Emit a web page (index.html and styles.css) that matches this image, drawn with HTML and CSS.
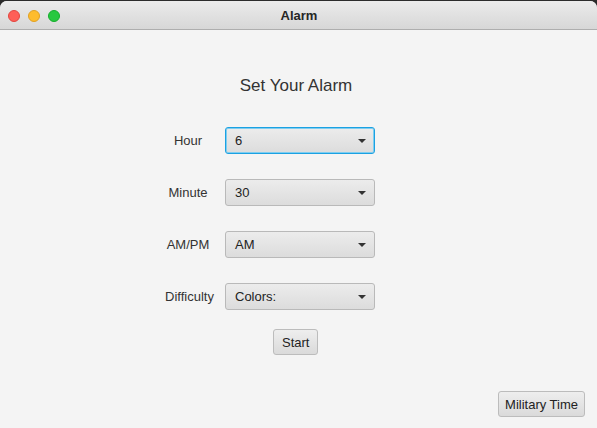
FILE: index.html
```html
<!DOCTYPE html>
<html>
<head>
<meta charset="utf-8">
<link rel="stylesheet" href="styles.css">
</head>
<body>
<div class="window">
  <div class="titlebar">
    <div class="lights">
      <span class="light red"></span>
      <span class="light yellow"></span>
      <span class="light green"></span>
    </div>
    <div class="wtitle">Alarm</div>
  </div>
  <div class="content">
    <h1 class="heading">Set Your Alarm</h1>
    <div class="form">
      <div class="label">Hour</div>
      <div class="combo focused"><span>6</span><i class="arrow"></i></div>
      <div class="label">Minute</div>
      <div class="combo"><span>30</span><i class="arrow"></i></div>
      <div class="label">AM/PM</div>
      <div class="combo"><span>AM</span><i class="arrow"></i></div>
      <div class="label label-wide">Difficulty</div>
      <div class="combo"><span>Colors:</span><i class="arrow"></i></div>
    </div>
    <div class="start-row"><button class="btn">Start</button></div>
    <div class="footer"><button class="btn btn-mil">Military Time</button></div>
  </div>
</div>
</body>
</html>
```
FILE: styles.css
```css
html, body {
  margin: 0;
  padding: 0;
  background: #2b2b2b;
}
body {
  width: 597px;
  height: 428px;
  overflow: hidden;
  font-family: "Liberation Sans", Arial, sans-serif;
  font-size: 13px;
  color: #333;
}
.window {
  width: 597px;
  height: 427px;
  margin-top: 1px;
  background: #f4f4f4;
  border-radius: 7px 7px 0 0;
  overflow: hidden;
  display: flex;
  flex-direction: column;
}
.titlebar {
  height: 28px;
  flex: 0 0 28px;
  border-bottom: 1px solid #aeaeae;
  background: linear-gradient(#ebebeb, #d7d7d7);
  position: relative;
  display: flex;
  align-items: center;
  justify-content: center;
}
.lights {
  position: absolute;
  left: 8px;
  top: 9px;
  display: flex;
  gap: 8px;
}
.light {
  width: 12px;
  height: 12px;
  border-radius: 50%;
  box-sizing: border-box;
}
.red { background: #fe5f57; border: 1px solid #e2463f; }
.yellow { background: #febc2e; border: 1px solid #e1a123; }
.green { background: #28c840; border: 1px solid #14ae2b; }
.wtitle {
  font-weight: bold;
  font-size: 13px;
  color: #262626;
  margin-left: 1px;
  margin-top: 1px;
}
.content {
  flex: 1;
  display: flex;
  flex-direction: column;
}
.heading {
  margin: 46px 0 0 -5px;
  font-weight: normal;
  font-size: 17px;
  line-height: 20px;
  text-align: center;
  color: #333;
}
.form {
  margin: 31px 0 0 158px;
  display: grid;
  grid-template-columns: 60px 150px;
  column-gap: 7px;
  row-gap: 25px;
  align-items: center;
}
.label {
  text-align: center;
  color: #333;
}
.label-wide {
  padding-left: 3px;
}
.combo {
  height: 27px;
  box-sizing: border-box;
  border: 1px solid #b9b9b9;
  border-radius: 3px;
  background: linear-gradient(#ececec, #dcdcdc);
  display: flex;
  align-items: center;
  justify-content: space-between;
  padding: 0 8px 0 9px;
  color: #222;
}
.combo.focused {
  border-color: #1ba1e2;
  box-shadow: inset 0 0 0 1px #7fcdf0;
}
.arrow {
  width: 0;
  height: 0;
  border-left: 4px solid transparent;
  border-right: 4px solid transparent;
  border-top: 4px solid #333;
  margin-top: 1px;
}
.start-row {
  margin: 19px 0 0 273px;
  display: flex;
}
.btn {
  font-family: "Liberation Sans", Arial, sans-serif;
  font-size: 13px;
  color: #222;
  height: 26px;
  box-sizing: border-box;
  border: 1px solid #bcbcbc;
  border-radius: 3px;
  background: linear-gradient(#eeeeee, #dadada);
  padding: 0 8px;
}
.btn-mil {
  padding: 0 6px;
}
.footer {
  margin-top: auto;
  margin-bottom: 11px;
  display: flex;
  justify-content: flex-end;
  padding-right: 12px;
}
```
